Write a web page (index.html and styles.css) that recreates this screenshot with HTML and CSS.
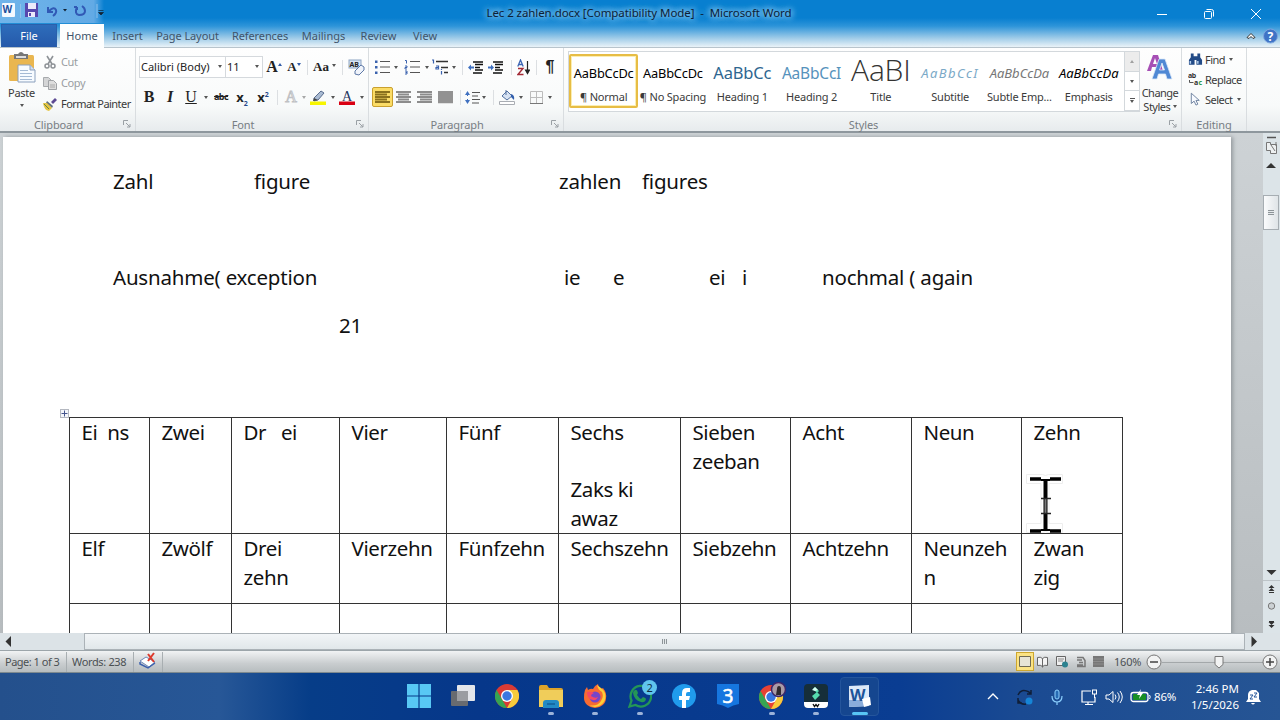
FILE: index.html
```
<!DOCTYPE html>
<html lang="en">
<head>
    <meta charset="UTF-8">
    <meta name="viewport" content="width=device-width, initial-scale=1.0">
    <title>Lec 2 zahlen.docx - Microsoft Word</title>
    <link rel="stylesheet" href="styles.css">
</head>
<body>
    <!-- Title bar -->
    <header class="titlebar">
        <div class="quick-access">
            <svg width="104" height="22" viewBox="0 0 104 22">
                <rect x="2" y="3" width="13" height="14" rx="1" fill="#f5f9ff"/>
                <text x="2.5" y="13" font-size="10" font-weight="bold" fill="#1d4f9c">W</text>
                <path d="M20.500 4v14M97 4v14" stroke="#8fc0ea"/>
                <path d="M25 3h13v14H25z" fill="#5748ae"/><path d="M28 3h8v6h-8zM28 12h7v5h-7z" fill="#eceafa"/><path d="M29 13h2v3h-2z" fill="#5748ae"/>
                <path d="M48 7v5h5M49 11q5-5 7-1q1 3-3 6" fill="none" stroke="#3159b5" stroke-width="2"/>
                <path d="M63 9h4l-2 2.500z" fill="#123"/>
                <path d="M77 7q-3 7 2 8q6 0 6-4q0-3-3-5M77 7h-3M77 7v3" fill="none" stroke="#3159b5" stroke-width="2"/>
                <path d="M98.500 10.500h5M98.500 12.500h5l-2.500 2.500z" stroke="#123" stroke-width=".7" fill="#123"/>
            </svg>
        </div>
        <div class="window-title">Lec 2 zahlen.docx [Compatibility Mode]&nbsp; -&nbsp; Microsoft Word</div>
        <div class="window-buttons">
            <svg width="12" height="12" viewBox="0 0 12 12"><path d="M1 6.500h10"/></svg>
            <svg width="12" height="12" viewBox="0 0 12 12"><rect x="1.500" y="3.500" width="7" height="7" rx="1"/><path d="M3.500 1.500h5q2 0 2 2v5"/></svg>
            <svg width="12" height="12" viewBox="0 0 12 12"><path d="M1 1l10 10M11 1L1 11"/></svg>
        </div>
    </header>

    <!-- Ribbon tabs -->
    <nav class="tabs">
        <a class="tab file">File</a>
        <a class="tab active">Home</a>
        <a class="tab insert">Insert</a>
        <a class="tab layout">Page Layout</a>
        <a class="tab references">References</a>
        <a class="tab mailings">Mailings</a>
        <a class="tab review">Review</a>
        <a class="tab view">View</a>
        <svg class="help" width="36" height="22" viewBox="0 0 36 22">
            <path d="M3 13.500L7 9.500L11 13.500L9 14.500L7 12.500L5 14.500Z" fill="#fff" stroke="#333"/>
            <circle cx="26.500" cy="12" r="7" fill="#3f74c6" stroke="#7da6de"/>
            <text x="23.500" y="16.500" font-size="12" font-weight="bold" fill="#fff">?</text>
        </svg>
    </nav>

    <!-- Ribbon -->
    <section class="ribbon">
        <div class="group clipboard">
            <div class="group-body">
                <div class="big-button paste">
                    <svg width="30" height="32" viewBox="0 0 30 32">
                        <rect x="2" y="4" width="25" height="26" rx="1.500" fill="#e9b650"/>
                        <path d="M7 3h4q3-4 6 0h4v5H7z" fill="#777"/><path d="M9 5h10v2H9z" fill="#ddd"/>
                        <path d="M11 14h12l5 5v12H11z" fill="#f7fbff" stroke="#8ba0bd"/><path d="M23 14v5h5" fill="#cfdced" stroke="#8ba0bd"/>
                        <path d="M13 19.500h8M13 22.500h12M13 25.500h12M13 28.500h12" stroke="#a5bad4"/>
                    </svg>
                    <span>Paste</span>
                    <i class="caret"></i>
                </div>
                <div class="small-buttons">
                    <div class="small-button off">
                        <svg width="14" height="14" viewBox="0 0 14 14"><path d="M4 1l5 8M10 1L5 9" stroke="#8e9297" stroke-width="1.600"/><circle cx="4" cy="11" r="2" fill="none" stroke="#8e9297" stroke-width="1.500"/><circle cx="10" cy="11" r="2" fill="none" stroke="#8e9297" stroke-width="1.500"/></svg>Cut
                    </div>
                    <div class="small-button off">
                        <svg width="14" height="14" viewBox="0 0 14 14"><path d="M.5 1.500h5l3 3v6h-8z" fill="#d4d5d6" stroke="#a7aaad"/><path d="M5.500 4.500h5l3 3v6h-8z" fill="#ddd" stroke="#a0a3a6"/><path d="M7 9h5M7 11h5" stroke="#aaa"/></svg>Copy
                    </div>
                    <div class="small-button painter">
                        <svg width="14" height="14" viewBox="0 0 14 14"><path d="M8 5l4-4l2 2l-4 4z" fill="#5d4a93"/><path d="M4 4l6 5l-1 2l-6-5z" fill="#60707f"/><path d="M0 6l4 0l5 5l-3 3q-5-1-6-8z" fill="#e4c443"/><path d="M1 7l5 5" stroke="#668344"/></svg>Format Painter
                    </div>
                </div>
            </div>
            <div class="group-label">Clipboard<svg class="launcher" width="8" height="8" viewBox="0 0 8 8"><path d="M.5 5V.5H5M3 3l4 4M7 4v3H4"/></svg></div>
        </div>

        <div class="group font">
            <div class="group-body rows">
                <div class="row font-top">
                    <span class="combo">Calibri (Body)<i class="caret"></i></span>
                    <span class="combo size">11<i class="caret"></i></span>
                    <span class="glyph grow">A<sup class="tri up"></sup></span>
                    <span class="glyph shrink">A<sup class="tri down"></sup></span>
                    <i class="sep"></i>
                    <span class="glyph case">Aa<i class="caret"></i></span>
                    <i class="sep"></i>
                    <svg width="17" height="17" viewBox="0 0 17 17"><rect x="1" y="1" width="12" height="8" fill="#d7e4f5" stroke="#8ea5c4"/><text x="1.500" y="7.500" font-size="7" font-weight="bold" fill="#222">AB</text><path d="M7 12l6-6l3 2v3l-5 5l-4-1z" fill="#f0f4fb" stroke="#5d78a6"/></svg>
                </div>
                <div class="row font-bottom">
                    <span class="glyph bold">B</span>
                    <span class="glyph italic">I</span>
                    <span class="glyph underline">U</span>
                    <i class="caret"></i>
                    <span class="glyph strike">abc</span>
                    <span class="glyph script">x<sub>2</sub></span>
                    <span class="glyph script">x<sup>2</sup></span>
                    <i class="sep"></i>
                    <span class="glyph effects">A</span>
                    <i class="caret off"></i>
                    <svg width="18" height="17" viewBox="0 0 18 17"><path d="M5 9l7-7l3 2l-6 7l-4 1z" fill="#a9bbd3" stroke="#596c8d"/><path d="M5 9l4 2l-5 1z" fill="#444"/><path d="M1 12.500h16v3.500H1z" fill="#f7f500"/></svg>
                    <i class="caret"></i>
                    <svg width="18" height="17" viewBox="0 0 18 17"><text class="serif" x="4" y="11.500" font-size="14" fill="#26355f">A</text><path d="M1 12.500h16v3.500H1z" fill="#d90012"/></svg>
                    <i class="caret"></i>
                </div>
            </div>
            <div class="group-label">Font<svg class="launcher" width="8" height="8" viewBox="0 0 8 8"><path d="M.5 5V.5H5M3 3l4 4M7 4v3H4"/></svg></div>
        </div>

        <div class="group paragraph">
            <div class="group-body rows">
                <div class="row para-top">
                    <svg width="16" height="16" viewBox="0 0 16 16"><path d="M6 2.500h10M6 8h10M6 13.500h10" stroke="#555"/><path d="M1 1.500h2.500v2.500H1zM1 7h2.500v2.500H1zM1 12.500h2.500v2.500H1z" fill="#3a62ae"/></svg>
                    <i class="caret"></i>
                    <svg width="16" height="16" viewBox="0 0 16 16"><path d="M6 2.500h10M6 8h10M6 13.500h10" stroke="#555"/><path d="M1 1.500h1.500V4.500M1 7h2v1.500H1V10h2M1 12h2v3H1M1.500 13.500H3" fill="none" stroke="#3a62ae"/></svg>
                    <i class="caret"></i>
                    <svg width="18" height="16" viewBox="0 0 18 16"><path d="M5 2.500h12M10 8.500h7M13 13.500h4" stroke="#333" stroke-width="1.300"/><path d="M1 1h1.500v3.500M5 7h2.500v3H5V8.500h2M10.500 12v3.500M10.500 10v1" fill="none" stroke="#3a62ae" stroke-width="1.200"/></svg>
                    <i class="caret"></i>
                    <i class="sep"></i>
                    <svg width="15" height="13" viewBox="0 0 15 13"><path d="M5 1h10M7 3.500h8M7 6.500h5M7 9h8M5 12h9" stroke="#111" stroke-width="1.400"/><path d="M0 6.500l3-3v2h3v2H3v2z" fill="#3f70c0"/></svg>
                    <svg width="15" height="13" viewBox="0 0 15 13"><path d="M5 1h10M7 3.500h8M7 6.500h5M7 9h8M5 12h9" stroke="#111" stroke-width="1.400"/><path d="M6 6.500l-3-3v2H0v2h3v2z" fill="#3f70c0"/></svg>
                    <i class="sep"></i>
                    <svg width="13" height="17" viewBox="0 0 13 17"><path d="M.8 7.500L3.500 1L6.200 7.500M2 5.500h3" fill="none" stroke="#3b65b4" stroke-width="1.300"/><path d="M1 9.500h5l-5 6h5.500" fill="none" stroke="#a32a36" stroke-width="1.400"/><path d="M10.500 2v12M8.500 11l2 3.500l2-3.500z" fill="#222" stroke="#222" stroke-width="1.200"/></svg>
                    <i class="sep"></i>
                    <span class="glyph pilcrow">¶</span>
                </div>
                <div class="row para-bottom">
                    <span class="pressed"><svg width="15" height="13" viewBox="0 0 15 13"><path d="M0 1h15M0 3.500h12M0 6h15M0 8.500h12M0 11h15" stroke="#8b711e" stroke-width="2.100"/></svg></span>
                    <svg width="15" height="13" viewBox="0 0 15 13"><path d="M0 1h15M2 3.500h11M0 6h15M2 8.500h11M0 11h15" stroke="#8c8c8c" stroke-width="2.100"/></svg>
                    <svg width="15" height="13" viewBox="0 0 15 13"><path d="M0 1h15M3 3.500h12M0 6h15M3 8.500h12M0 11h15" stroke="#8c8c8c" stroke-width="2.100"/></svg>
                    <svg width="15" height="13" viewBox="0 0 15 13"><path d="M0 1h15M0 3.500h15M0 6h15M0 8.500h15M0 11h15" stroke="#929292" stroke-width="2.300"/></svg>
                    <i class="sep"></i>
                    <svg width="15" height="13" viewBox="0 0 15 13"><path d="M7 1.500h8M7 5h6M7 8.500h8M7 12h7" stroke="#555"/><path d="M2.500 0l2.500 4H0zM2.500 13L0 9h5z" fill="#3f70c0"/><path d="M2.500 3v2M2.500 8v2" stroke="#3f70c0"/></svg>
                    <i class="caret"></i>
                    <i class="sep"></i>
                    <svg width="17" height="16" viewBox="0 0 17 16"><path d="M3 7l5-5l5 5l-5 4z" fill="#d6e2f3" stroke="#52709f"/><path d="M7 1v5" stroke="#52709f"/><path d="M12 5q4 1 3 6l-3-3z" fill="#315eac"/><path d="M.5 12.500h15v3H.5z" fill="#fff" stroke="#a9adb3"/></svg>
                    <i class="caret"></i>
                    <svg width="13" height="13" viewBox="0 0 13 13"><path d="M.5.5h12v12H.5zM6.500.5v12M.5 6.500h12" fill="none" stroke="#bcbcbc"/><path d="M0 12.500h13" stroke="#777"/></svg>
                    <i class="caret"></i>
                </div>
            </div>
            <div class="group-label">Paragraph<svg class="launcher" width="8" height="8" viewBox="0 0 8 8"><path d="M.5 5V.5H5M3 3l4 4M7 4v3H4"/></svg></div>
        </div>

        <div class="group styles">
            <div class="group-body">
                <div class="gallery">
                    <div class="style selected"><b>AaBbCcDc</b><span>¶ Normal</span></div>
                    <div class="style"><b>AaBbCcDc</b><span>¶ No Spacing</span></div>
                    <div class="style heading1"><b>AaBbCc</b><span>Heading 1</span></div>
                    <div class="style heading2"><b>AaBbCcI</b><span>Heading 2</span></div>
                    <div class="style title"><b>AaBI</b><span>Title</span></div>
                    <div class="style subtitle"><b>AaBbCcI</b><span>Subtitle</span></div>
                    <div class="style subtle"><b>AaBbCcDa</b><span>Subtle Emp...</span></div>
                    <div class="style emphasis"><b>AaBbCcDa</b><span>Emphasis</span></div>
                    <div class="spinner">
                        <span class="off"><i class="caret flip"></i></span>
                        <span><i class="caret"></i></span>
                        <span class="more"><i class="caret"></i></span>
                    </div>
                </div>
                <div class="big-button change">
                    <svg width="28" height="29" viewBox="0 0 28 29"><path fill-rule="evenodd" d="M1 18L7 2h5l5 16h-4l-1-4H6l-1 4zM7 11h4L9 5z" fill="#a64fb5"/><path fill-rule="evenodd" d="M6 26L13 6h6l7 20h-5l-1.500-5h-7L11 26zM13.500 17h5L16 10z" fill="#4f88d4" stroke="#dce9f8" stroke-width=".8"/></svg>
                    <span>Change</span>
                    <span>Styles <i class="caret"></i></span>
                </div>
            </div>
            <div class="group-label">Styles<svg class="launcher" width="8" height="8" viewBox="0 0 8 8"><path d="M.5 5V.5H5M3 3l4 4M7 4v3H4"/></svg></div>
        </div>

        <div class="group editing">
            <div class="group-body">
                <div class="small-buttons">
                    <div class="small-button">
                        <svg width="15" height="14" viewBox="0 0 16 14"><path d="M3 1h3v3h4V1h3v4l2 3v5H9V8H7v5H1V8l2-3z" fill="#234b87"/><path d="M2.500 9v3M10.500 9v3" stroke="#b4cfed" stroke-width="1.600"/></svg>Find<i class="caret"></i>
                    </div>
                    <div class="small-button">
                        <svg width="15" height="16" viewBox="0 0 15 16"><g font-size="7" font-weight="bold"><text x="0" y="7" fill="#333">ab</text><text x="6" y="14" fill="#333">a</text><text x="10.500" y="14" fill="#2f9a43">c</text></g><path d="M1.500 9v2.500h4" fill="none" stroke="#555"/></svg>Replace
                    </div>
                    <div class="small-button">
                        <svg width="15" height="14" viewBox="0 0 16 14"><path d="M3.500.8v11l3-2.500l2 4.200l2-1l-2-4h3.500z" fill="#f7faff" stroke="#6b7f9d"/></svg>Select<i class="caret"></i>
                    </div>
                </div>
            </div>
            <div class="group-label">Editing</div>
        </div>
    </section>

    <!-- Document area -->
    <main class="workspace">
        <div class="canvas">
            <article class="page">
                <p><span class="t1">Zahl</span><span class="t2">figure</span><span class="t3">zahlen</span><span>figures</span></p>
                <p></p>
                <p><span class="t4">Ausnahme( exception</span><span class="t5">ie</span><span class="t6">e</span><span class="t7">ei</span><span class="t8">i</span><span>nochmal ( again</span></p>
                <p><span class="t9"></span><span>21</span></p>
                <p></p>
                <div class="table-wrap">
                    <svg class="table-handle" width="9" height="9" viewBox="0 0 9 9"><rect x=".5" y=".5" width="8" height="8" fill="#f4f6fa" stroke="#b4b8c0"/><path d="M4.500 1.500v6M1.500 4.500h6" stroke="#44548c"/></svg>
                    <table>
                        <colgroup><col class="c80"><col class="c82"><col class="c108"><col class="c107"><col class="c112"><col class="c122"><col class="c110"><col class="c121"><col class="c110"><col class="c101"></colgroup>
                        <tr class="r1">
                            <td>Ei&nbsp; ns</td><td>Zwei</td><td>Dr&nbsp;&nbsp; ei</td><td>Vier</td><td>Fünf</td><td>Sechs<br><br>Zaks ki<br>awaz</td><td>Sieben<br>zeeban</td><td>Acht</td><td>Neun</td><td>Zehn</td>
                        </tr>
                        <tr class="r2">
                            <td>Elf</td><td>Zwölf</td><td>Drei<br>zehn</td><td>Vierzehn</td><td>Fünfzehn</td><td>Sechszehn</td><td>Siebzehn</td><td>Achtzehn</td><td>Neunzeh<br>n</td><td>Zwan<br>zig</td>
                        </tr>
                        <tr class="r3">
                            <td></td><td></td><td></td><td></td><td></td><td></td><td></td><td></td><td></td><td></td>
                        </tr>
                    </table>
                    <!-- mouse pointer -->
                    <svg class="ibeam" width="38" height="62" viewBox="0 0 38 62">
                        <path d="M.5 2.500h16l3 1l3-1h14v9H23v40h13.500v9h-14l-3-1l-3 1H.5v-9H15v-40H.5z" fill="#fff" stroke="#eee"/>
                        <path d="M4 7h11M24 7h11M4 59h11M24 59h11" fill="none" stroke="#000" stroke-width="3.500"/>
                        <path d="M15 8h9M15 58h9" stroke="#000" stroke-width="2"/>
                        <path d="M19.500 8v50" stroke="#000" stroke-width="4"/>
                        <path d="M19.500 27v14" stroke="#777" stroke-width="2"/>
                        <path d="M15 26.500h10M15 41.500h10" stroke="#222" stroke-width="1.500"/>
                    </svg>
                </div>
            </article>
        </div>
        <aside class="vscroll">
            <svg width="17" height="42" viewBox="0 0 17 42"><path d="M4 4.500h9" stroke="#555" stroke-width="1.500"/><path d="M3.500 9.500h4v2h6v9h-6v-3h-4zM8 12l4 6M13 9v4" fill="#edf0f1" stroke="#777"/><path d="M3 35h10l-5-5z" fill="#333"/></svg>
            <div class="vthumb"><i></i></div>
            <svg class="vnav" width="17" height="68" viewBox="0 0 17 68"><path d="M3.500 5h10l-5 5z" fill="#333"/><path d="M0 15.500h17" stroke="#bdc4c8"/><path d="M5.500 23l3-3l3 3zM5.500 26l3-3l3 3zM5.500 57l3 3l3-3zM5.500 60l3 3l3-3z" fill="#333"/><path d="M6 27.500h5M6 56.500h5" stroke="#333"/><circle cx="8.500" cy="41" r="3.200" fill="#ccd1d4" stroke="#777"/></svg>
        </aside>
    </main>

    <div class="hscroll">
        <svg width="84" height="17" viewBox="0 0 84 17"><path d="M11 3v11l-5.500-5.500z" fill="#333"/></svg>
        <div class="hthumb"><i></i></div>
        <svg width="35" height="17" viewBox="0 0 35 17"><path d="M6.500 3v11L12 8.500z" fill="#333"/></svg>
    </div>

    <!-- Status bar -->
    <footer class="status">
        <span class="pages">Page: 1 of 3</span>
        <span class="words">Words: 238</span>
        <span class="proof"><svg width="18" height="17" viewBox="0 0 18 17"><path d="M1 9l6-4l9 5l-6 5z" fill="#fff" stroke="#6d86b7"/><path d="M1 10v2l8 4l7-5" fill="none" stroke="#3c61ae" stroke-width="1.500"/><path d="M9 2l6 8M15 1L9 9" stroke="#dc3a2d" stroke-width="2"/></svg></span>
        <div class="views">
            <span class="view-on"><svg width="12" height="11" viewBox="0 0 12 11"><path d="M.5.5h11v10H.5z" fill="#e7e4d5" stroke="#6f6a53"/></svg></span>
            <svg width="12" height="12" viewBox="0 0 12 12"><path d="M.5 1.500q3-1 5 1q2-2 5-1v8q-3-1-5 1q-2-2-5-1zM5.500 2.500v9" fill="#f4f4f4" stroke="#666"/></svg>
            <svg width="13" height="12" viewBox="0 0 13 12"><path d="M.5.5h9v9h-9z" fill="#eee" stroke="#666"/><path d="M2 3h6M2 5h5" stroke="#888"/><circle cx="9" cy="8.500" r="3" fill="#2c8290"/></svg>
            <svg width="10" height="12" viewBox="0 0 10 12"><path d="M1 1.500h6l2 3v6H1M1 4h5M3 6.500h4M1 9h6" fill="none" stroke="#777" stroke-width="1.500"/></svg>
            <svg width="11" height="11" viewBox="0 0 11 11"><path d="M0 0h11v11H0z" fill="#777"/><path d="M0 3h11M0 5.500h11M0 8h11" stroke="#8c8c8c"/></svg>
        </div>
        <span class="percent">160%</span>
        <svg class="zoom" width="134" height="18" viewBox="0 0 134 18">
            <path d="M16 9.500h108" stroke="#a3a8aa"/>
            <g fill="#f2f3f3" stroke="#777"><circle cx="8" cy="9" r="7"/><circle cx="124" cy="9" r="7"/><path d="M69 3.500h8v8l-4 3.500l-4-3.500z"/></g>
            <path d="M4 9h8M120 9h8M124 5v8" stroke="#444" stroke-width="1.500"/>
        </svg>
    </footer>

    <!-- Taskbar -->
    <div class="taskbar">
        <div class="apps">
            <span class="app"><svg width="24" height="24" viewBox="0 0 24 24"><path d="M0 0h11.400v11.400H0zM12.600 0H24v11.400H12.600zM0 12.600h11.400V24H0zM12.600 12.600H24V24H12.600z" fill="#58c8f4"/></svg></span>
            <span class="app"><svg width="24" height="24" viewBox="0 0 24 24"><rect x="6" y="1" width="18" height="16" rx="1" fill="#e4e6ea"/><rect x="0" y="7" width="17" height="15" rx="1" fill="#686b70"/><path d="M6 7h11v10H6z" fill="#9b9da1"/></svg></span>
            <span class="app"><svg width="24" height="24" viewBox="0 0 24 24"><circle cx="12" cy="12" r="12" fill="#d93b34"/><path d="M1.600 6L12 24A12 12 0 0 1 1.600 6z" fill="#37a552"/><path d="M12 24A12 12 0 0 0 22.400 6H12l5 9z" fill="#f7cb3b"/><circle cx="12" cy="12" r="6" fill="#fff"/><circle cx="12" cy="12" r="4.700" fill="#3977e0"/></svg></span>
            <span class="app open"><svg width="24" height="24" viewBox="0 0 24 24"><path d="M0 3q0-2 2-2h6l2 3h12q2 0 2 2v17H0z" fill="#dea329"/><path d="M0 6h24v17H0z" fill="#f0cd5a"/><path d="M4 24v-5q0-3 3-3h10q3 0 3 3v5z" fill="#228ac5"/><path d="M8 20h8" stroke="#125f98" stroke-width="1.500"/></svg></span>
            <span class="app open"><svg width="24" height="24" viewBox="0 0 24 24"><path d="M2 6l2-3l1 3q3-2 5-1q1-3 5-5q0 3 3 5l2-1q4 5 3 10a11 10 0 0 1-22 0q0-5 1-8z" fill="#f86b32"/><path d="M14 1q1 5 5 7q2 5-1 9q-4 6-12 4q6 4 12 0q6-4 4-12q-1-3-4-5z" fill="#fdcf36"/><circle cx="12" cy="13" r="5.500" fill="#7545c8"/><path d="M4 8q4-1 7 1q-3 1-3 3q4 3 7 1q-2 5-8 2q-3-2-3-7z" fill="#f54865"/></svg></span>
            <span class="app open"><svg width="24" height="24" viewBox="0 0 24 24"><path d="M1.500 22.500l2-6A10.300 10.300 0 1 1 7.500 21z" fill="none" stroke="#249657" stroke-width="2.300"/><path d="M7 6q2-1 3 3l-1 2q2 3 4 4l2-2q3 1 3 2q-1 4-5 3q-7-2-8-9q0-2 2-3z" fill="#249657"/></svg><em class="badge">2</em></span>
            <span class="app"><svg width="24" height="24" viewBox="0 0 24 24"><circle cx="12" cy="12" r="12" fill="#209bec"/><path d="M10 24v-8H7v-4h3V9q0-5 5-5h3v4h-2q-2 0-2 2v2h4l-1 4h-3v8z" fill="#fff"/></svg></span>
            <span class="app"><svg width="22" height="24" viewBox="0 0 22 24"><path d="M0 0h22v20q-6 1-11 4Q6 21 0 20z" fill="#1676df"/><text x="5.500" y="18.500" font-size="19" fill="#fff" stroke="#fff" stroke-width=".6">3</text></svg></span>
            <span class="app open"><svg width="28" height="28" viewBox="0 0 28 28"><g transform="translate(1 3)"><circle cx="12" cy="12" r="12" fill="#e64234"/><path d="M1.600 6L12 24A12 12 0 0 1 1.600 6z" fill="#37a552"/><path d="M12 24A12 12 0 0 0 22.400 6H12l5 9z" fill="#f7cb3b"/><circle cx="12" cy="12" r="6" fill="#fff"/><circle cx="12" cy="12" r="4.700" fill="#3977e0"/></g><circle cx="20.500" cy="7.500" r="7" fill="#a99ba6" stroke="#3b276c" stroke-width="1.500"/><path d="M18 13l1-6q0-3 2-3t2 3v6z" fill="#30292e"/></svg></span>
            <span class="app open"><svg width="24" height="24" viewBox="0 0 24 24"><rect width="24" height="24" rx="4" fill="#162e39"/><path d="M9 5l2-2l4 4l-2 2zM8 12l5-4l3 3l-5 5z" fill="#56dbae"/><path d="M8 6l3-3l3 3l-3 1z" fill="#d7fff3"/><path d="M0 18h24v2q0 4-4 4H4q-4 0-4-4z" fill="#fff"/><path d="M9 20l1.500 2.500l1.500-2l1.500 2L15 20" fill="none" stroke="#111" stroke-width="1.300"/></svg></span>
            <span class="app current"><svg width="24" height="24" viewBox="0 0 24 24"><path d="M1 2l20-1v21l-20 1z" fill="#dce9f8"/><path d="M1 16h20v6L1 23z" fill="#8aaddb"/><text x="2" y="17" font-size="16" font-weight="bold" fill="#1d5499">W</text><path d="M14 15l8-2l1 8l-7 2z" fill="#fff"/></svg></span>
        </div>
        <div class="tray">
            <svg class="wide" width="12" height="24" viewBox="0 0 12 24"><path d="M1 14l5-5l5 5" fill="none" stroke="#fff" stroke-width="1.400"/></svg>
            <svg class="wide" width="18" height="24" viewBox="0 0 18 24"><path d="M2 10q3-7 11-3l2 2M15 5v4h-4M2 13v5h4M2 15q3 5 8 4" fill="none" stroke="#101f38" stroke-width="1.500"/><circle cx="13" cy="16" r="3.500" fill="#1685d6"/></svg>
            <svg class="wide" width="12" height="24" viewBox="0 0 12 24"><rect x="4" y="5" width="4" height="9" rx="2" fill="#276bb4" stroke="#8dd1ff"/><path d="M1 11q0 6 5 6t5-6M6 17v3" fill="none" stroke="#8dd1ff" stroke-width="1.200"/></svg>
            <svg width="18" height="24" viewBox="0 0 18 24"><path d="M11 6H2v11h13v-5M5 19.500h8M8 17v3" fill="none" stroke="#fff" stroke-width="1.200"/><rect x="12.500" y="5" width="4" height="4" fill="none" stroke="#fff"/><path d="M14.500 9v4" stroke="#fff"/></svg>
            <svg width="18" height="24" viewBox="0 0 18 24"><path d="M1 10h3l4-3.500v11L4 14H1zM10 9.500q2 2.500 0 5M12.500 7.500q3.500 4.500 0 9M15 6q4.500 6 0 12" fill="none" stroke="#fff"/></svg>
            <svg width="21" height="24" viewBox="0 0 21 24"><rect x="1" y="7.500" width="17" height="9" rx="2.500" fill="none" stroke="#fff" stroke-width="1.300"/><rect x="3" y="9" width="13" height="6" rx="1" fill="#178f24"/><path d="M19.500 10q1.500 2 0 4" stroke="#fff" fill="none"/><path d="M11 4l-4 6h3l-1 4l4-6h-3z" fill="#fff"/></svg>
            <span class="battery">86%</span>
            <div class="clock"><span>2:46 PM</span><span>1/5/2026</span></div>
            <svg class="bell" width="16" height="18" viewBox="0 0 16 18"><path d="M1 14l2-3V7q0-4 4-5h4l3 3v6l2 3z" fill="#fff"/><path d="M6 15h4q-2 3-4 0z" fill="#fff"/><path d="M5 7h3l-3 4h3M9 5h3l-3 4h3" fill="none" stroke="#24569b"/></svg>
        </div>
    </div>
</body>
</html>
```
FILE: styles.css
```
* {
    box-sizing: border-box;
}

body {
    margin: 0;
    width: 1280px;
    height: 720px;
    overflow: hidden;
    display: flex;
    flex-direction: column;
    font-family: "Noto Sans", "Open Sans", sans-serif;
    font-size: 11px;
    color: #3a3a3a;
    background: linear-gradient(#087fd0 0, #087fd0 18px, #2d94d9 26px, #9ecbe8 38px, #eaf3f8 47px);
}

svg {
    display: block;
    flex: none;
}

svg text {
    font-family: "Noto Sans", sans-serif;
}

svg .serif {
    font-family: "Liberation Serif", serif;
}

/* Title bar */
.titlebar {
    height: 24px;
    display: flex;
    flex: none;
}

.quick-access {
    width: 104px;
    height: 23px;
    background: linear-gradient(90deg, #70b4ea, #62aae5 90%, transparent);
}

.window-title {
    width: 312px;
    margin-left: 379px;
    line-height: 25px;
    font-size: 11.5px;
    color: #0c2036;
    white-space: nowrap;
    text-align: center;
    letter-spacing: -0.08px;
    text-shadow: 0 0 6px #9bd3f5, 0 0 6px #9bd3f5, 0 0 9px #9bd3f5;
}

.window-buttons {
    margin-left: auto;
    display: flex;
    gap: 35px;
    padding: 8px 18px 0 0;
}

.window-buttons svg {
    fill: none;
    stroke: #fff;
}

/* Tabs */
.tabs {
    height: 24px;
    flex: none;
    display: flex;
    border-bottom: 1px solid #b8c4cc;
}

.tab {
    text-align: center;
    line-height: 24px;
    color: #40546a;
    white-space: nowrap;
}

.file {
    width: 56px;
    margin: 0 3px 0 1px;
    line-height: 22px;
    color: #fff;
    background: linear-gradient(#2e6dbb, #2559aa);
    border: 1px solid #2a60ac;
    border-bottom: 0;
}

.active {
    width: 44px;
    height: 24px;
    background: #fdfefe;
}

.insert { width: 47px; }
.layout { width: 73px; }
.references { width: 72px; }
.mailings { width: 55px; }
.review { width: 55px; }
.view { width: 38px; }

/* page layout tab reads wider than the rest */
.layout {
    letter-spacing: -0.5px;
}

.references {
    letter-spacing: -0.5px;
}

.layout,
.references {
    letter-spacing: -0.1px;
}

.help {
    margin-left: auto;
}

/* Ribbon */
.ribbon {
    height: 85px;
    flex: none;
    display: flex;
    background: linear-gradient(#fefefe, #f8fafa 70%, #e7ebed);
    border-bottom: 2px solid #8e979d;
}

.group {
    display: flex;
    flex-direction: column;
    border-right: 1px solid #d9dde0;
}

.group-body {
    height: 67px;
    flex: none;
    display: flex;
}

.group-label {
    position: relative;
    text-align: center;
    height: 16px;
    line-height: 20px;
    padding-right: 18px;
    letter-spacing: -0.1px;
    color: #777d83;
}

.launcher {
    position: absolute;
    right: 4px;
    top: 5px;
    fill: none;
    stroke: #9aa0a5;
}

.clipboard { width: 136px; }
.font { width: 233px; }
.paragraph { width: 195px; }
.styles { width: 618px; }
.editing { width: 65px; }

.editing .group-label {
    padding: 0;
}

.caret {
    display: inline-block;
    flex: none;
    width: 0;
    height: 0;
    border: 2.5px solid transparent;
    border-top: 3px solid #555;
    border-bottom: 0;
}

.caret.off {
    opacity: 0.5;
}

.caret.flip {
    transform: rotate(180deg);
}

.big-button {
    width: 43px;
    display: flex;
    flex-direction: column;
    align-items: center;
    line-height: 14px;
}

.paste {
    padding: 3px 0 0;
    letter-spacing: -0.3px;
}

.paste span {
    padding: 3px 0 4px;
}

.small-buttons {
    display: flex;
    flex-direction: column;
    padding-top: 3px;
}

.small-button {
    height: 21px;
    display: flex;
    align-items: center;
    gap: 4px;
    white-space: nowrap;
}

.clipboard .small-button {
    letter-spacing: -0.4px;
}

.clipboard .painter {
    letter-spacing: -0.55px;
}

.editing .small-buttons {
    padding: 1px 0 0 6px;
}

.editing .small-button {
    height: 20px;
    gap: 2px;
    letter-spacing: -0.5px;
}

.editing .caret {
    margin-left: 2px;
}

.small-button.off {
    color: #999da1;
}

.rows {
    flex-direction: column;
    padding: 4px 0 0 3px;
}

.row {
    height: 30px;
    flex: none;
    display: grid;
    align-items: center;
    justify-items: center;
}

.font-top {
    grid-template-columns: 87px 37px 22px 18px 9px 25px 10px 18px;
}

.font-bottom {
    grid-template-columns: 20px 22px 20px 10px 20px 22px 20px 9px 18px 8px 20px 9px 20px 9px;
}

.para-top {
    grid-template-columns: 20px 8px 23px 7px 20px 8px 8px 18px 22px 10px 14px 12px 16px;
}

.para-bottom {
    grid-template-columns: 20px 22px 20px 22px 8px 16px 8px 10px 18px 10px 20px 8px;
}

.combo {
    width: 100%;
    height: 22px;
    display: flex;
    align-items: center;
    justify-content: space-between;
    padding: 0 3px 2px 1px;
    border: 1px solid #d5d9dd;
    background: #fff;
    color: #222;
}

.size {
    border-left: 0;
}

.sep {
    width: 1px;
    height: 15px;
    background: #dcdfe2;
}

.glyph {
    font-family: "Liberation Serif", serif;
    font-size: 16px;
    line-height: 20px;
    color: #222;
    white-space: nowrap;
}

.grow,
.shrink,
.bold,
.case {
    font-weight: bold;
}

.shrink { font-size: 13px; }
.case { font-size: 13px; }

.case .caret {
    margin: 0 0 4px 3px;
}

.tri {
    display: inline-block;
    border: 2px solid transparent;
    border-bottom: 3px solid #315ca8;
    border-top: 0;
}

.tri.down {
    transform: rotate(180deg);
}

.italic {
    font-style: italic;
    font-weight: bold;
}

.underline {
    text-decoration: underline;
}

.strike {
    font-family: "Noto Sans", sans-serif;
    font-size: 9px;
    font-weight: bold;
    letter-spacing: -0.6px;
    text-decoration: line-through;
}

.script {
    font-family: "Noto Sans", sans-serif;
    font-size: 13px;
    font-weight: bold;
    line-height: 12px;
}

.script sub,
.script sup {
    font-size: 7px;
    line-height: 0;
    color: #26498b;
}

.effects {
    color: #fff;
    -webkit-text-stroke: 1px #bfc1c4;
}

.pilcrow {
    font-family: "Liberation Sans", sans-serif;
    font-weight: bold;
}

.pressed {
    width: 21px;
    height: 20px;
    display: flex;
    align-items: center;
    justify-content: center;
    background: #fbdc66;
    border: 1px solid #c9a02f;
    border-radius: 2px;
}

/* Style gallery */
.gallery {
    width: 572px;
    height: 61px;
    margin: 3px 0 0 4px;
    display: flex;
    flex: none;
    border: 1px solid #d3d8dc;
    background: #fff;
}

.style {
    width: 69.3px;
    height: 54px;
    margin-top: 2px;
    padding-top: 8px;
    display: flex;
    flex-direction: column;
    align-items: center;
    white-space: nowrap;
    letter-spacing: -0.2px;
    border: 2px solid transparent;
}

.style b {
    height: 25px;
    flex: none;
    line-height: 19px;
    font-size: 13px;
    font-weight: normal;
    letter-spacing: -0.2px;
    color: #000;
}

.style:nth-child(-n+2) b {
    letter-spacing: -0.2px;
    font-size: 12.8px;
}

.style.selected {
    border-color: #e7bd45;
    border-radius: 2px;
    box-shadow: inset 0 0 0 1px #fbeeb2;
}

.style.heading1 b { font-size: 16.5px; line-height: 18px; color: #2e6690; }
.style.heading2 b { font-size: 15.5px; line-height: 19px; color: #5692bc; }
.style.title b { font-size: 30px; font-family: "Open Sans", sans-serif; font-weight: 300; line-height: 11px; color: #333; }
.style.subtitle b { font-style: italic; color: #7ba9c7; letter-spacing: 1.4px; }
.style.subtle b { font-style: italic; color: #777; letter-spacing: 0; }
.style.emphasis b { font-style: italic; letter-spacing: 0; }

.spinner {
    width: 15px;
    margin-left: auto;
    display: flex;
    flex-direction: column;
}

.spinner span {
    flex: 1;
    display: flex;
    align-items: center;
    justify-content: center;
    border: 1px solid #d3d8dc;
    border-width: 0 0 1px 1px;
}

.spinner .off {
    background: #ececec;
}

.spinner .off .caret {
    opacity: 0.5;
}

.more .caret {
    margin-top: 3px;
}

.spinner .more {
    flex-direction: column;
}

.more::before {
    content: "";
    width: 5px;
    height: 1px;
    background: #555;
}

.spinner .more .caret {
    margin-top: 1px;
}

.change {
    padding-top: 5px;
    width: 40px;
    white-space: nowrap;
    letter-spacing: -0.5px;
}

.change svg {
    margin-bottom: 4px;
}

.change .caret {
    margin-bottom: 3px;
}

/* Document */
.workspace {
    height: 500px;
    flex: none;
    display: flex;
}

.canvas {
    width: 1263px;
    height: 500px;
    padding: 4px 0 0 3px;
    overflow: hidden;
    background: linear-gradient(#cdd2d5, #b8bdc0);
}

.page {
    width: 1228px;
    height: 520px;
    padding: 20px 0 0 67px;
    background: #fff;
    box-shadow: 2px 0 4px #949a9e;
    color: #111;
    font-size: 20.5px;
    letter-spacing: -0.2px;
}

.page p {
    height: 48px;
    margin: 0;
    padding-left: 43px;
    display: flex;
    line-height: 48px;
    white-space: pre;
}

.t1 { width: 141px; }
.t2 { width: 305px; }
.t3 { width: 83px; }
.t4 { width: 451px; }
.t5 { width: 49px; }
.t6 { width: 96px; }
.t7 { width: 33px; }
.t8 { width: 80px; }
.t9 { width: 226px; }

.table-wrap {
    position: relative;
    margin: 20px 0 0 -1px;
    letter-spacing: -0.4px;
}

.table-handle {
    position: absolute;
    left: -9px;
    top: -8px;
}

.page table {
    width: 1054px;
    table-layout: fixed;
    border-collapse: collapse;
}

.page td {
    padding: 0 0 0 11.5px;
    border: 1px solid #333;
    vertical-align: top;
    white-space: nowrap;
    line-height: 28.75px;
}

.page .r1 td {
    line-height: 28.7px;
}

.r1 { height: 115px; }
.r2 { height: 70px; }
.r3 { height: 80px; }

.c80 { width: 80px; }
.c82 { width: 82px; }
.c108 { width: 108px; }
.c107 { width: 107px; }
.c112 { width: 112px; }
.c122 { width: 122px; }
.c110 { width: 110px; }
.c121 { width: 121px; }
.c101 { width: 101px; }

.ibeam {
    position: absolute;
    left: 957px;
    top: 55px;
}

/* Scroll bars */
.vscroll {
    width: 17px;
    display: flex;
    flex-direction: column;
    background: #dce4e8;
}

.vthumb {
    height: 35px;
    margin: 20px 1px 0 0;
    display: flex;
    align-items: center;
    justify-content: center;
    background: linear-gradient(90deg, #fafbfc, #dfe4e7);
    border: 1px solid #a6adb2;
}

.vthumb i {
    width: 6px;
    height: 5px;
    background: repeating-linear-gradient(#8d9498 0, #8d9498 1px, #e5e9eb 1px, #e5e9eb 2px);
}

.vnav {
    margin-top: auto;
}

.hscroll {
    height: 18px;
    flex: none;
    display: flex;
    background: #dce3e7;
    border-bottom: 1px solid #9ca5aa;
}

.hthumb {
    flex: 1;
    display: flex;
    align-items: center;
    justify-content: center;
    background: linear-gradient(#f2f5f7, #e1e7ea);
    border: 1px solid #abb2b7;
}

.hthumb i {
    width: 5px;
    height: 5px;
    background: repeating-linear-gradient(90deg, #8d9498 0, #8d9498 1px, #e5e9eb 1px, #e5e9eb 2px);
}

/* Status bar */
.status {
    height: 22px;
    flex: none;
    display: flex;
    align-items: center;
    background: linear-gradient(#f1f3f4, #c9cdcf 60%, #b7bdbf);
    border-bottom: 1px solid #7d898f;
    line-height: 20px;
    color: #4b5053;
}

.pages,
.words,
.proof {
    height: 20px;
    padding-left: 5px;
    border-right: 1px solid #a8aeb1;
}

.pages {
    width: 67px;
    letter-spacing: -0.5px;
}

.words {
    width: 67px;
    letter-spacing: -0.35px;
}

.proof { width: 29px; }

.views {
    height: 21px;
    margin-left: auto;
    display: flex;
    align-items: center;
    gap: 7px;
}

.view-on {
    width: 18px;
    height: 19px;
    margin-right: -4px;
    display: flex;
    align-items: center;
    justify-content: center;
    background: #fbe384;
    border: 1px solid #cea72e;
}

.percent {
    width: 32px;
    margin-left: 10px;
    letter-spacing: -0.2px;
}

/* Taskbar */
.taskbar {
    height: 47px;
    flex: none;
    display: flex;
    background: linear-gradient(90deg, #24508c 0, #275797 220px, #063d88 310px, #06378a 480px, #0a3d92 900px, #1a4a92 1020px, #265594 1280px);
}

.apps {
    display: flex;
    padding-left: 396px;
}

.app {
    width: 44.2px;
    height: 47px;
    padding: 0 0 1px 1px;
    display: flex;
    align-items: center;
    justify-content: center;
    position: relative;
}

.open::after,
.current::after {
    content: "";
    position: absolute;
    bottom: 5px;
    width: 6px;
    height: 3px;
    border-radius: 2px;
    background: #9cb3d9;
}

.current {
    width: 39px;
    height: 39px;
    margin: 4px 0 0 2px;
    background: #15468f;
    border: 1px solid #24559c;
    border-radius: 4px;
}

.current::after {
    width: 16px;
    bottom: 0;
    background: #58c5f5;
}

.badge {
    position: absolute;
    right: 4px;
    top: 7px;
    width: 15px;
    height: 15px;
    border-radius: 50%;
    background: #60c5ed;
    color: #102b42;
    font-style: normal;
    line-height: 15px;
    text-align: center;
}

.tray {
    margin-left: auto;
    display: flex;
    align-items: center;
    padding-right: 19px;
    gap: 7px;
    color: #fff;
    font-size: 11.5px;
    letter-spacing: -0.2px;
}

.tray .wide {
    margin-right: 10px;
}

.battery {
    width: 24px;
    margin-left: -4px;
}

.clock {
    width: 54px;
    display: flex;
    flex-direction: column;
    align-items: flex-end;
    line-height: 16px;
    letter-spacing: 0;
}

.bell {
    margin-left: -1px;
}
```
